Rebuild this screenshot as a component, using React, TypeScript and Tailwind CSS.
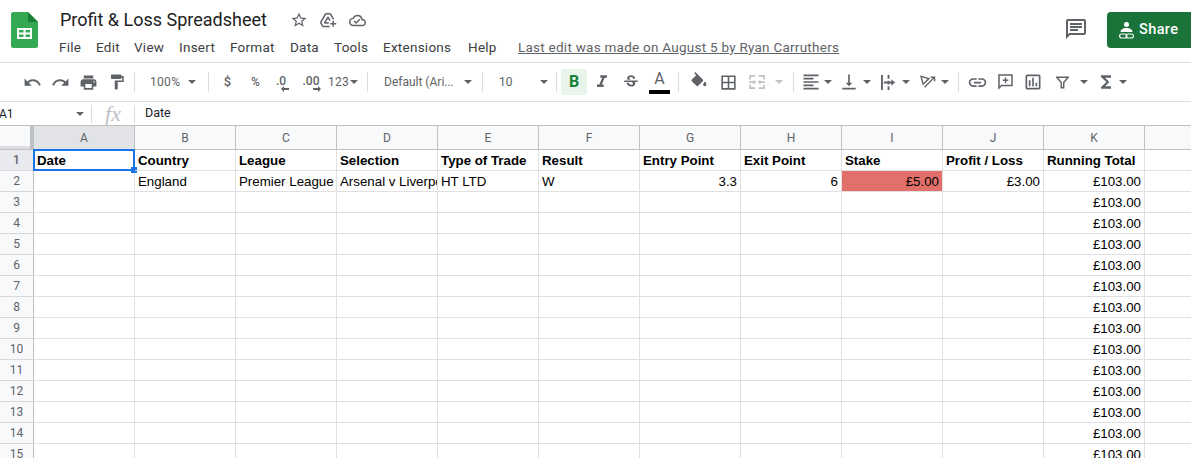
import type { ReactNode } from "react";
import {
  MdAddToDrive,
  MdOutlineCloudDone,
  MdOutlineStarBorder,
  MdUndo,
  MdRedo,
  MdPrint,
  MdFormatPaint,
  MdFormatItalic,
  MdStrikethroughS,
  MdBorderAll,
  MdFormatAlignLeft,
  MdVerticalAlignBottom,
  MdLink,
  MdOutlineInsertChart,
  MdFunctions,
  MdOutlineChat,
} from "react-icons/md";

const COLUMNS = ["A", "B", "C", "D", "E", "F", "G", "H", "I", "J", "K"];
const MENU = [
  { label: "File", className: "w-[37px]" },
  { label: "Edit", className: "w-[38px]" },
  { label: "View", className: "w-[45px]" },
  { label: "Insert", className: "w-[51px]" },
  { label: "Format", className: "w-[60px]" },
  { label: "Data", className: "w-[44px]" },
  { label: "Tools", className: "w-[49px]" },
  { label: "Extensions", className: "w-[85px]" },
  { label: "Help", className: "w-[50px]" },
];
const HEADERS = [
  "Date",
  "Country",
  "League",
  "Selection",
  "Type of Trade",
  "Result",
  "Entry Point",
  "Exit Point",
  "Stake",
  "Profit / Loss",
  "Running Total",
];
const ROW_TWO: { text: string; right?: boolean; fill?: boolean }[] = [
  { text: "" },
  { text: "England" },
  { text: "Premier League" },
  { text: "Arsenal v Liverpool" },
  { text: "HT LTD" },
  { text: "W" },
  { text: "3.3", right: true },
  { text: "6", right: true },
  { text: "£5.00", right: true, fill: true },
  { text: "£3.00", right: true },
  { text: "£103.00", right: true },
];
const ROW_NUMBERS = [3, 4, 5, 6, 7, 8, 9, 10, 11, 12, 13, 14, 15];

function Caret({ className = "" }: { className?: string }) {
  return (
    <div
      className={`w-0 h-0 border-x-[4.5px] border-t-[4.5px] border-x-transparent border-t-[#5f6368] ${className}`}
    />
  );
}

function Sep({ className = "" }: { className?: string }) {
  return <div className={`w-px h-5 bg-[#dadce0] shrink-0 ${className}`} />;
}

function Slot({ w, children }: { w: string; children: ReactNode }) {
  return (
    <div className={`flex items-center justify-center shrink-0 h-6 ${w}`}>
      {children}
    </div>
  );
}

function Logo() {
  return (
    <svg width="27" height="36" viewBox="0 0 27 36" className="shrink-0">
      <path
        d="M17 0H2.500A2.500 2.500 0 0 0 0 2.500v31A2.500 2.500 0 0 0 2.500 36h22a2.500 2.500 0 0 0 2.500-2.500V10z"
        fill="#34a853"
      />
      <path d="M17 0l10 10h-10z" fill="#188038" />
      <path
        d="M6 16h15v11H6zM8 18v2.500h4.500V18zM14.500 18v2.500H19V18zM8 22.500V25h4.500v-2.500zM14.500 22.500V25H19v-2.500z"
        fill="#fff"
        fillRule="evenodd"
      />
    </svg>
  );
}

function ShareIcon() {
  return (
    <svg width="15" height="17" viewBox="0 0 15 17" fill="none" className="shrink-0">
      <circle cx="7.500" cy="2.500" r="2.500" fill="#fff" />
      <path d="M1.500 10c0-2.500 3-4 6-4s6 1.500 6 4z" fill="#fff" />
      <rect x="0.600" y="12" width="7.300" height="4" rx="2" stroke="#fff" strokeWidth="1.100" />
      <rect x="7.100" y="12" width="7.300" height="4" rx="2" stroke="#fff" strokeWidth="1.100" />
    </svg>
  );
}

function MergeIcon() {
  return (
    <svg width="16" height="14" viewBox="0 0 18 16" fill="#bdc1c6">
      <path d="M0 0h7v2H2v3H0zM11 0h7v5h-2V2h-5zM0 11h2v3h5v2H0zM16 11h2v5h-7v-2h5zM0 7h5V5l3 3-3 3V9H0zM18 7h-5V5l-3 3 3 3V9h5z" />
    </svg>
  );
}

function WrapIcon() {
  return (
    <svg width="15" height="15" viewBox="0 0 16 16" fill="#5f6368">
      <path d="M0 0h2v16H0zM7 0h2v4H7zM7 6h2v4H7zM7 12h2v4H7zM3 7h8V4.500L15 8l-4 3.500V9H3z" />
    </svg>
  );
}

function RotateIcon() {
  return (
    <svg width="16" height="14" viewBox="0 0 18 16" fill="none" stroke="#5f6368" strokeWidth="1.600">
      <path d="M1 1.500l9 2.500-6.500 6.500z" />
      <path d="M5 14l11-11M12 2.500h4.500V7" />
    </svg>
  );
}

function FilterIcon() {
  return (
    <svg width="13" height="13" viewBox="0 0 16 16" fill="none" stroke="#5f6368" strokeWidth="1.800">
      <path d="M1 1.500h14L9.500 8v6.500h-3V8z" />
    </svg>
  );
}

function FillIcon() {
  return (
    <svg width="20" height="20" viewBox="0 0 24 24" fill="#5f6368">
      <path d="M16.560 8.940L7.620 0 6.210 1.410l2.380 2.380-5.150 5.150c-.59.59-.59 1.540 0 2.120l5.500 5.500c.29.29.68.44 1.060.44s.77-.15 1.060-.44l5.500-5.500c.59-.58.59-1.530 0-2.120zM19 11.500s-2 2.170-2 3.500c0 1.100.9 2 2 2s2-.9 2-2c0-1.330-2-3.500-2-3.500z" />
    </svg>
  );
}

function CommentPlusIcon() {
  return (
    <svg width="15" height="16" viewBox="0 0 15 16" fill="none" stroke="#5f6368" strokeWidth="1.500">
      <path d="M1 1h13v10.500H3.500L1 14z" />
      <path d="M7.500 3.500v5.500M4.700 6.200h5.600" />
    </svg>
  );
}

function Arrow({ left }: { left?: boolean }) {
  return (
    <svg width="8" height="6" viewBox="0 0 8 6" fill="#5f6368" className="absolute top-[15px] right-0">
      {left ? <path d="M0 3l3-3v2h5v2H3v2z" /> : <path d="M8 3L5 0v2H0v2h5v2z" />}
    </svg>
  );
}

function Toolbar() {
  const icon = "text-[#5f6368]";
  return (
    <div className="flex items-center h-[39px] pl-[18px] border-b border-[#dadce0] text-[#5f6368] text-[12px] font-['Roboto',sans-serif]">
      <Slot w="w-[28px]"><MdUndo size={19} className={icon} /></Slot>
      <Slot w="w-[28px]"><MdRedo size={19} className={icon} /></Slot>
      <Slot w="w-[28px]"><MdPrint size={19} className={icon} /></Slot>
      <Slot w="w-[29px]"><MdFormatPaint size={18} className={icon} /></Slot>
      <Sep className="ml-[3px]" />
      <div className="w-[61px] pl-[15px] flex items-center shrink-0 tracking-[0.3px]">
        <span className="w-[42px]">100%</span>
        <Caret />
      </div>
      <Sep className="ml-[12px]" />
      <Slot w="w-[37px]"><span className="text-[13px] font-medium">$</span></Slot>
      <Slot w="w-[19px]"><span className="text-[12px] font-medium">%</span></Slot>
      <Slot w="w-[32px]">
        <div className="relative w-[16px] h-[22px] text-center leading-[20px] font-medium text-[12px]">
          .0
          <Arrow left />
        </div>
      </Slot>
      <Slot w="w-[28px]">
        <div className="relative w-[20px] h-[22px] text-center leading-[20px] font-medium text-[12px]">
          .00
          <Arrow />
        </div>
      </Slot>
      <div className="w-[37px] flex items-center shrink-0 gap-px text-[12px] tracking-[0.2px] pl-[3px]">
        123
        <Caret />
      </div>
      <Sep className="ml-[5px]" />
      <div className="w-[104px] pl-[16px] flex items-center shrink-0">
        <span className="w-[80px] text-[12px] whitespace-nowrap">Default (Ari...</span>
        <Caret />
      </div>
      <Sep className="ml-[10px]" />
      <div className="w-[73px] pl-[16px] flex items-center shrink-0">
        <span className="w-[41px] text-[12px]">10</span>
        <Caret />
      </div>
      <Sep className="mr-[4px]" />
      <div className="w-[26px] h-[26px] shrink-0 rounded-[3px] bg-[#e6f4ea] flex items-center justify-center text-[#188038] font-bold text-[16px] font-['Roboto',sans-serif]">
        B
      </div>
      <Slot w="w-[29px]"><MdFormatItalic size={20} className={icon} /></Slot>
      <Slot w="w-[29px]"><MdStrikethroughS size={18} className={icon} /></Slot>
      <div className="w-[29px] h-[26px] shrink-0 flex flex-col items-center">
        <span className="text-[16px] leading-[20px] font-normal">A</span>
        <div className="w-[21px] h-[4px] bg-black mt-[1px]" />
      </div>
      <Sep className="ml-[4px]" />
      <Slot w="w-[39px]"><FillIcon /></Slot>
      <Slot w="w-[21px]"><MdBorderAll size={19} className={icon} /></Slot>
      <Slot w="w-[36px]"><MergeIcon /></Slot>
      <div className="w-[18px] shrink-0"><Caret className="border-t-[#bdc1c6]" /></div>
      <Sep />
      <Slot w="w-[30px]"><MdFormatAlignLeft size={20} className={`${icon} ml-[4px]`} /></Slot>
      <div className="w-[11px] shrink-0"><Caret /></div>
      <Slot w="w-[28px]"><MdVerticalAlignBottom size={20} className={icon} /></Slot>
      <div className="w-[12px] shrink-0"><Caret /></div>
      <Slot w="w-[27px]"><WrapIcon /></Slot>
      <div className="w-[13px] shrink-0"><Caret /></div>
      <Slot w="w-[26px]"><RotateIcon /></Slot>
      <div className="w-[17px] shrink-0"><Caret /></div>
      <Sep />
      <Slot w="w-[36px]"><MdLink size={21} className={icon} /></Slot>
      <Slot w="w-[21px]"><CommentPlusIcon /></Slot>
      <Slot w="w-[34px]"><MdOutlineInsertChart size={20} className={icon} /></Slot>
      <Slot w="w-[24px]"><FilterIcon /></Slot>
      <div className="w-[19px] shrink-0 pl-[6px]"><Caret /></div>
      <Slot w="w-[26px]"><MdFunctions size={20} className={icon} /></Slot>
      <div className="w-[12px] shrink-0"><Caret /></div>
    </div>
  );
}

function Grid() {
  const cell = "h-[21px] border-r border-b border-[#e0e0e0] px-[3px] text-[13.3px] leading-[21px] text-black whitespace-nowrap overflow-hidden";
  const rowHead = "h-[21px] bg-[#f8f9fa] border-r border-r-[#c0c0c0] border-b border-b-[#d8d8d8] flex items-center justify-center text-[12px] text-[#5f6368] font-['Roboto',sans-serif]";
  return (
    <div className="grid grid-cols-[34px_repeat(11,101px)_1fr] font-['Liberation_Sans',sans-serif]">
      <div className="h-[24px] bg-[#f8f9fa] border-b border-[#c0c0c0] border-r-[4px] border-r-[#bdc1c6] shadow-[inset_0_-3px_0_#dadce0]" />
      {COLUMNS.map((col, i) => (
        <div
          key={col}
          className={`h-[24px] border-r border-b border-[#c0c0c0] flex items-center justify-center text-[12px] text-[#5f6368] font-['Roboto',sans-serif] ${
            i === 0 ? "bg-[#e1e3e6]" : "bg-[#f8f9fa]"
          }`}
        >
          {col}
        </div>
      ))}
      <div className="h-[24px] bg-[#f8f9fa] border-b border-[#c0c0c0]" />

      <div className={`${rowHead} !bg-[#e8eaed] font-medium`}>1</div>
      {HEADERS.map((h, i) => (
        <div key={h} className={`${cell} font-bold relative overflow-visible`}>
          {h}
          {i === 0 && (
            <div className="absolute inset-[-1px] border-2 border-[#1a73e8]">
              <div className="absolute -right-[4px] -bottom-[4px] w-[6px] h-[6px] bg-[#1a73e8]" />
            </div>
          )}
        </div>
      ))}
      <div className={`${cell} border-r-0`} />

      <div className={rowHead}>2</div>
      {ROW_TWO.map((c, i) => (
        <div
          key={i}
          className={`${cell} ${c.right ? "text-right" : ""} ${c.fill ? "bg-[#e26f69]" : ""}`}
        >
          {c.text}
        </div>
      ))}
      <div className={`${cell} border-r-0`} />

      {ROW_NUMBERS.map((n) => (
        <div key={n} className="contents">
          <div className={rowHead}>{n}</div>
          {COLUMNS.map((col) => (
            <div key={col} className={`${cell} ${col === "K" ? "text-right" : ""}`}>
              {col === "K" ? "£103.00" : ""}
            </div>
          ))}
          <div className={`${cell} border-r-0`} />
        </div>
      ))}
    </div>
  );
}

export default function App() {
  return (
    <div className="w-[1191px] h-[458px] overflow-hidden bg-white font-['Roboto',sans-serif]">
      <div className="h-[63px] flex border-b border-[#dadce0]">
        <div className="pl-[11px] pt-[12px] w-[59px] shrink-0">
          <Logo />
        </div>
        <div className="flex-1 pt-[8px] min-w-0">
          <div className="flex items-center h-[24px] pl-[1px]">
            <span className="w-[231px] text-[18px] leading-[24px] text-[#202124]">
              Profit &amp; Loss Spreadsheet
            </span>
            <MdOutlineStarBorder size={18} className="text-[#5f6368] -ml-[1px]" />
            <MdAddToDrive size={18} className="text-[#5f6368] ml-[11px]" />
            <MdOutlineCloudDone size={17} className="text-[#5f6368] ml-[12px]" />
          </div>
          <div className="flex items-center h-[22px] mt-[4px] text-[13.5px] tracking-[0.25px] text-[#3c4043]">
            {MENU.map((m) => (
              <span key={m.label} className={`shrink-0 ${m.className}`}>
                {m.label}
              </span>
            ))}
            <span className="underline text-[#5f6368] whitespace-nowrap">
              Last edit was made on August 5 by Ryan Carruthers
            </span>
          </div>
        </div>
        <div className="flex items-start pt-[12px] shrink-0">
          <MdOutlineChat size={24} className="text-[#5f6368] mt-[5px] mr-[19px]" />
          <div className="w-[84px] h-[36px] rounded-l-[4px] bg-[#1a7339] flex items-center pl-[12px] gap-[5px] text-white text-[14.5px] font-medium tracking-[0.4px]">
            <ShareIcon />
            <span>Share</span>
          </div>
        </div>
      </div>

      <Toolbar />

      <div className="flex items-center h-[24px] border-b border-[#c0c0c0] text-[12px] text-[#202124]">
        <div className="w-[91px] flex items-center overflow-hidden shrink-0">
          <span className="-ml-[1px] w-[77px]">A1</span>
          <Caret />
        </div>
        <Sep className="!h-[18px]" />
        <div className="w-[42px] shrink-0 text-center font-['Liberation_Serif',serif] italic text-[22px] leading-[22px] text-[#bdc1c6]">
          fx
        </div>
        <Sep className="!h-[18px]" />
        <span className="pl-[10px] text-[12.5px]">Date</span>
      </div>

      <Grid />
    </div>
  );
}
